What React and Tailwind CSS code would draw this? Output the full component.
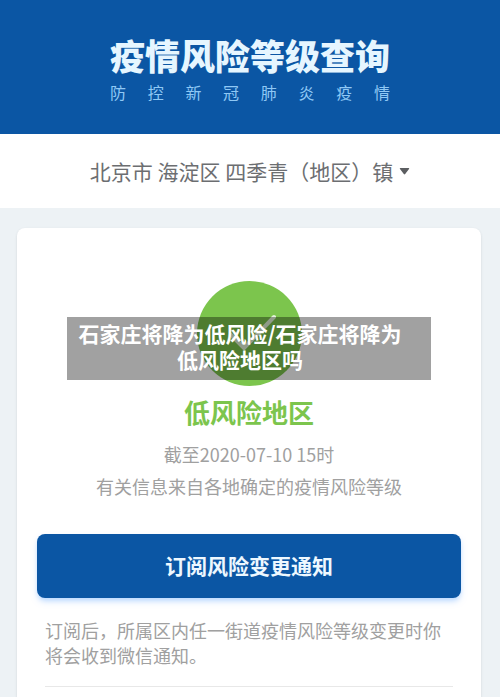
const SUBTITLE = ['防', '控', '新', '冠', '肺', '炎', '疫', '情'];

const Header = () => (
  <header className="flex flex-col items-center bg-[#0b56a4] pt-[34px] pb-[30px]">
    <div>
      <h1 className="text-[35px] leading-[42px] font-black text-[#e6f6ff]">疫情风险等级查询</h1>
      <p className="mt-1 flex justify-between text-base leading-6 text-[#8fc8f5]">
        {SUBTITLE.map((char) => (
          <span key={char}>{char}</span>
        ))}
      </p>
    </div>
  </header>
);

const LocationPicker = () => (
  <div className="flex justify-center bg-white py-5">
    <button type="button" className="flex items-center gap-1.5 text-[21px] leading-[34px] text-[#6c6e71]">
      北京市 海淀区 四季青（地区）镇
      <svg width="11" height="7" viewBox="0 0 10 7" aria-hidden="true">
        <path d="M1 0h8q1.3 0 .5 1L5.7 6q-.7.8-1.4 0L.5 1Q-.3 0 1 0z" fill="#5c5e61" />
      </svg>
    </button>
  </div>
);

const RiskBadge = () => (
  <div className="relative flex justify-center">
    <svg className="size-[105px]" viewBox="0 0 105 105" aria-hidden="true">
      <circle cx="52.5" cy="52.5" r="52.5" fill="#7cc54d" />
      <path
        d="M34 54l13 13 30-31"
        fill="none"
        stroke="#e4f5da"
        strokeWidth="4"
        strokeLinecap="round"
        strokeLinejoin="round"
      />
    </svg>
    <p className="absolute inset-x-[30px] top-9 bg-black/37 pt-[3px] pr-[26px] pb-2 pl-2 text-center text-[21px] leading-[26px] font-bold text-white">
      石家庄将降为低风险/石家庄将降为低风险地区吗
    </p>
  </div>
);

const App = () => {
  return (
    <div className="flex min-h-screen flex-col bg-[#edf2f5] font-['Noto_Sans_CJK_SC',sans-serif]">
      <Header />
      <LocationPicker />
      <main className="mt-5 mr-[19px] ml-[17px] flex-1 rounded-t-lg bg-white px-5 pt-[53px] shadow-sm">
        <RiskBadge />
        <div className="text-center">
          <h2 className="mt-2 text-[26px] leading-9 font-bold text-[#7cc54d]">低风险地区</h2>
          <div className="mt-2 text-lg leading-8 text-[#a0a0a0]">
            <p>截至2020-07-10 15时</p>
            <p>有关信息来自各地确定的疫情风险等级</p>
          </div>
        </div>
        <button
          type="button"
          className="mt-8 h-16 w-full rounded-lg bg-[#0b56a4] text-[21px] font-bold text-[#eef8ff] shadow-md shadow-blue-200"
        >
          订阅风险变更通知
        </button>
        <p className="mx-2 mt-5 border-b border-[#e8e8e8] pb-[18px] text-lg leading-[25px] text-[#a0a0a0]">
          订阅后，所属区内任一街道疫情风险等级变更时你将会收到微信通知。
        </p>
      </main>
    </div>
  );
};

export default App;
